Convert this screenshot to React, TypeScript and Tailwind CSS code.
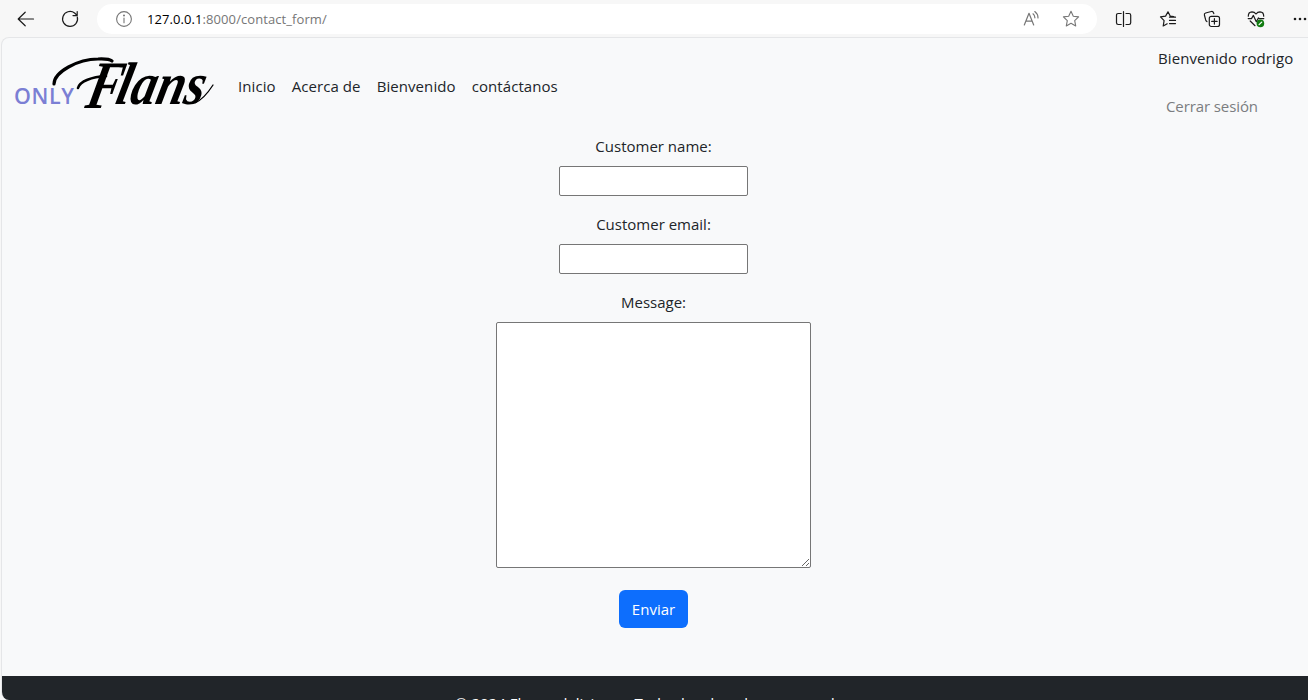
import React from 'react';

const stroke = { fill: 'none', stroke: 'currentColor', strokeLinecap: 'round', strokeLinejoin: 'round' } as const;

function BackIcon() {
  return (
    <svg width="18" height="16" viewBox="0 0 18 16" {...stroke} strokeWidth="1.2">
      <path d="M16.5 8H1.2M8.2 1.2 1.2 8l7 6.8" />
    </svg>
  );
}

function ReloadIcon() {
  return (
    <svg width="18" height="18" viewBox="0 0 18 18" {...stroke} strokeWidth="1.2">
      <path d="M16.3 7A7.5 7.5 0 1 1 13.6 3l2.4 2.2M16.2 1.6v4h-4.2" />
    </svg>
  );
}

function InfoIcon() {
  return (
    <svg width="18" height="18" viewBox="0 0 18 18" {...stroke} strokeWidth="1.1">
      <circle cx="9" cy="9" r="7.4" />
      <path d="M9 8v4.7" />
      <circle cx="9" cy="5.5" r=".45" fill="currentColor" />
    </svg>
  );
}

function ReadAloudIcon() {
  return (
    <svg width="18" height="18" viewBox="0 0 18 18" {...stroke} strokeWidth="1.2">
      <path d="M2.3 15 7 3.3 11.7 15M3.9 11.2h6.2M11 3.8q1.9 1.6 1.9 4M12.8 1.6q3.2 2.4 3.2 6.4" />
    </svg>
  );
}

function StarIcon() {
  return (
    <svg width="18" height="18" viewBox="0 0 18 18" {...stroke} strokeWidth="1.1">
      <path d="M9 1.3l2.3 4.9 5.3.7-3.9 3.7 1 5.3L9 13.3l-4.7 2.6 1-5.3L1.4 6.9l5.3-.7z" />
    </svg>
  );
}

function SplitIcon() {
  return (
    <svg width="18" height="18" viewBox="0 0 18 18" {...stroke} strokeWidth="1.2">
      <path d="M8.5 1.5v15M6.2 3.5H3.2q-1.7 0-1.7 1.7v7.6q0 1.7 1.7 1.7h3M11 3.5h3q1.7 0 1.7 1.7v7.6q0 1.7-1.7 1.7h-3" />
    </svg>
  );
}

function FavoritesIcon() {
  return (
    <svg width="18" height="18" viewBox="0 0 18 18" {...stroke} strokeWidth="1.2">
      <path d="M14.7 6.6l-3.5-.5L9 1.8 6.6 6.1l-5.1.8 3.6 3.7-.9 5.4 4-2.2M10.5 7.2h6M10.5 10.4h6M10.5 13.6h6" />
    </svg>
  );
}

function CollectionsIcon() {
  return (
    <svg width="18" height="18" viewBox="0 0 18 18" {...stroke} strokeWidth="1.2">
      <path d="M3.9 11.6Q3 11 2.6 9.7L1.4 5q-.4-1.6 1.2-2L8.3 1.5q1.6-.4 2.2 1.2l.3 1" />
      <rect x="6.3" y="6.3" width="10.2" height="10.2" rx="2" />
      <path d="M11.4 8.7v5.4M8.7 11.4h5.4" />
    </svg>
  );
}

function HealthIcon() {
  return (
    <svg width="18" height="18" viewBox="0 0 18 18" {...stroke} strokeWidth="1.2">
      <path d="M1.3 6.2Q1.2 2 5 1.8q2.4 0 4 2.2 1.6-2.2 4-2.2 3.8.2 3.7 4.4M1.2 8.6h3.3l1.9-3.2 2.9 6.4 2.2-3.9.8.7h4.5M3.2 11 8 15.7" />
      <circle cx="13.4" cy="13.4" r="3.8" fill="#107c10" stroke="none" />
      <path d="m12.1 14.6 2.6-2.5" stroke="#fff" strokeWidth="1.3" />
    </svg>
  );
}

function Logo() {
  return (
    <svg width="208" height="66" viewBox="0 0 208 66" role="img" aria-label="Only Flans">
      <text x="2" y="51" fontFamily="Open Sans" fontWeight="600" fontSize="21.5" fill="#7b7fd4" textLength="60" lengthAdjust="spacing">ONLY</text>
      <path d="M42 31C42 19 66 6 86 6q11-.5 14 2" fill="none" stroke="#000" strokeWidth="3.2" strokeLinecap="round" />
      <path d="M66 35C68 28 80 24 94 23" fill="none" stroke="#000" strokeWidth="2.6" strokeLinecap="round" />
      <path d="M183 50Q192 46 201 32" fill="none" stroke="#000" strokeWidth="1.3" strokeLinecap="round" />
      <g transform="translate(73 51) skewX(-13)" fontFamily="Liberation Serif" fontStyle="italic" fontWeight="700">
        <text x="0" y="4" fontSize="68" textLength="34" lengthAdjust="spacingAndGlyphs">F</text>
        <text x="29" y="0" fontSize="60" textLength="88" lengthAdjust="spacingAndGlyphs">lans</text>
      </g>
    </svg>
  );
}

function BrowserBar() {
  return (
    <header className="flex h-[37px] shrink-0 items-center bg-[#f7f7f7] text-[#1b1b1b]">
      <div className="flex w-[97px] shrink-0 items-center gap-[26px] pl-[17px]"><BackIcon /><ReloadIcon /></div>
      <div className="flex h-[30px] w-[1000px] shrink-0 items-center rounded-full bg-white pl-[18px] text-[#767676]">
        <InfoIcon />
        <span className="ml-[14px] text-[13px] tracking-[0.08px]"><span className="text-black">127.0.0.1</span>:8000/contact_form/</span>
        <div className="ml-auto flex gap-[22px] pr-[17px]"><ReadAloudIcon /><StarIcon /></div>
      </div>
      <div className="flex shrink-0 items-center gap-[26px] pl-[18px]">
        <SplitIcon /><FavoritesIcon /><CollectionsIcon /><HealthIcon />
        <svg width="18" height="18" viewBox="0 0 18 18" fill="currentColor"><circle cx="4" cy="9" r="1.3" /><circle cx="9" cy="9" r="1.3" /><circle cx="14" cy="9" r="1.3" /></svg>
      </div>
    </header>
  );
}

function Field({ id, label }: { id: string; label: string }) {
  return (
    <div className="mb-4 flex flex-col items-center">
      <label htmlFor={id} className="mb-2">{label}</label>
      <input id={id} className="h-[30px] w-[189px] rounded-[2px] border border-[#767676] bg-white" />
    </div>
  );
}

export default function App() {
  return (
    <div className="flex h-[700px] flex-col overflow-hidden bg-[#f7f7f7] font-['Open_Sans',sans-serif] text-[15px] leading-6 text-[#212529]">
      <BrowserBar />
      <div className="ml-px flex min-h-0 flex-1 flex-col overflow-hidden rounded-l-lg border-t border-l border-[#e5e6e8] bg-[#f8f9fa]">
        <nav className="flex h-[96px] shrink-0 items-start justify-between">
          <div className="flex h-full items-center">
            <div className="ml-[10px] w-[226px]"><Logo /></div>
            <div className="flex gap-4 tracking-[0.08px]"><a>Inicio</a><a>Acerca de</a><a>Bienvenido</a><a>contáctanos</a></div>
          </div>
          <div className="w-[150px] pt-2">
            <div className="tracking-[0.1px]">Bienvenido rodrigo</div>
            <div className="mt-6 pl-2 tracking-[-0.1px] text-[#7b7d80]">Cerrar sesión</div>
          </div>
        </nav>
        <form className="flex w-[1303px] flex-1 flex-col items-center">
          <Field id="name" label="Customer name:" />
          <Field id="email" label="Customer email:" />
          <label htmlFor="message" className="mb-2">Message:</label>
          <textarea id="message" className="h-[246px] w-[315px] shrink-0 resize rounded-[2px] border border-[#767676] bg-white" />
          <button type="button" className="mt-[22px] h-[38px] w-[69px] shrink-0 rounded-md bg-[#0d6efd] text-white">Enviar</button>
        </form>
        <footer className="flex h-6 shrink-0 justify-center overflow-hidden bg-[#212529] pt-[15px] text-white">
          <span className="whitespace-nowrap">© 2024 Flanes deliciosos. Todos los derechos reservados.</span>
        </footer>
      </div>
    </div>
  );
}
